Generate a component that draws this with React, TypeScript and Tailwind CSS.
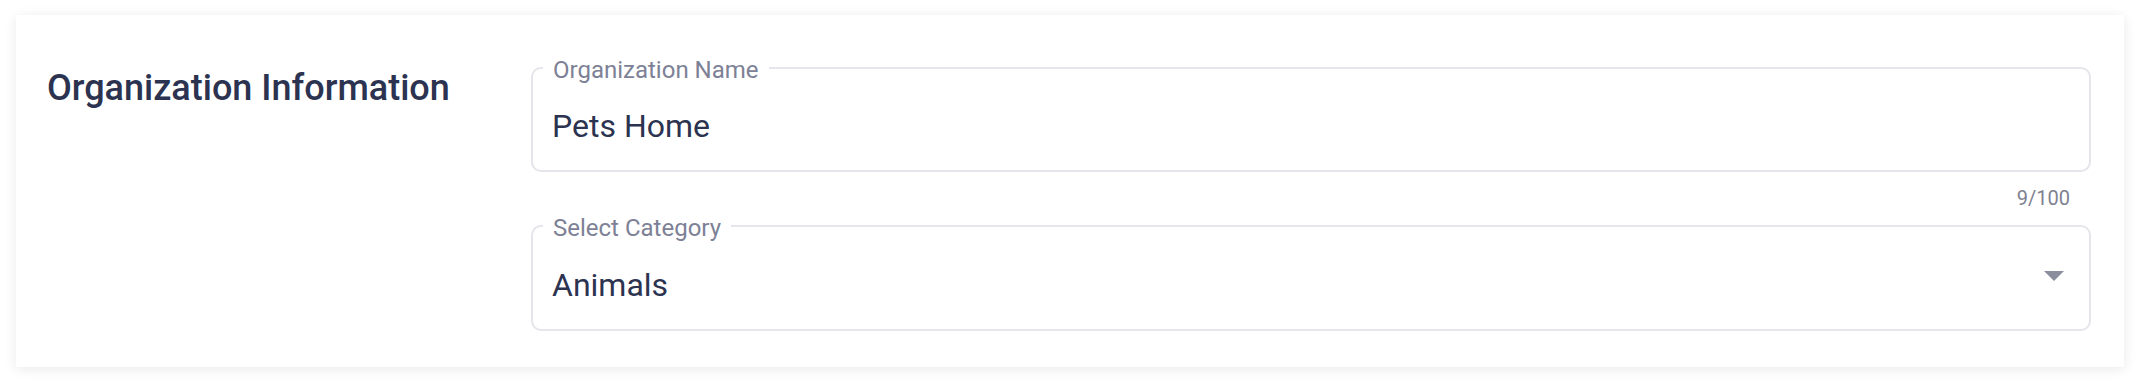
import React from 'react'

function OutlinedField({ label, value, select }: { label: string; value: string; select?: boolean }) {
  return (
    <div className={`relative rounded-[10px] border-2 border-[#e5e5eb] bg-white ${select ? 'h-[106px]' : 'h-[105px]'}`}>
      <span className="absolute left-[10px] top-[-11px] bg-white px-[10px] text-[24px] leading-[24px] text-[#7d8196]">
        {label}
      </span>
      <div className="flex items-start justify-between pl-[19px] pr-[25px]">
        <span className={`text-[32px] leading-[40px] text-[#2c3350] ${select ? 'pt-[38px]' : 'pt-[37px]'}`}>{value}</span>
        {select && (
          <svg width="20" height="10" viewBox="0 0 20 10" className="mt-[44px]">
            <polygon points="0,0 20,0 10,10" fill="#8b8f9d" />
          </svg>
        )}
      </div>
    </div>
  )
}

export default function App() {
  return (
    <div className="h-[384px] w-full bg-white px-[16px] pt-[15px] font-['Roboto',sans-serif]">
      <div className="flex h-[352px] bg-white pl-[31px] pr-[33px] pt-[50px] shadow-[0_2px_12px_rgba(0,0,0,0.09)]">
        <div className="w-[484px] shrink-0">
          <h2 className="pt-[1px] text-[36px] font-medium leading-[44px] text-[#2c3350]">Organization Information</h2>
        </div>
        <div className="flex flex-1 flex-col pt-[2px]">
          <OutlinedField label="Organization Name" value="Pets Home" />
          <div className="mt-[14px] pr-[21px] text-right text-[20px] leading-[24px] text-[#7e8190]">9/100</div>
          <div className="mt-[15px]">
            <OutlinedField label="Select Category" value="Animals" select />
          </div>
        </div>
      </div>
    </div>
  )
}
